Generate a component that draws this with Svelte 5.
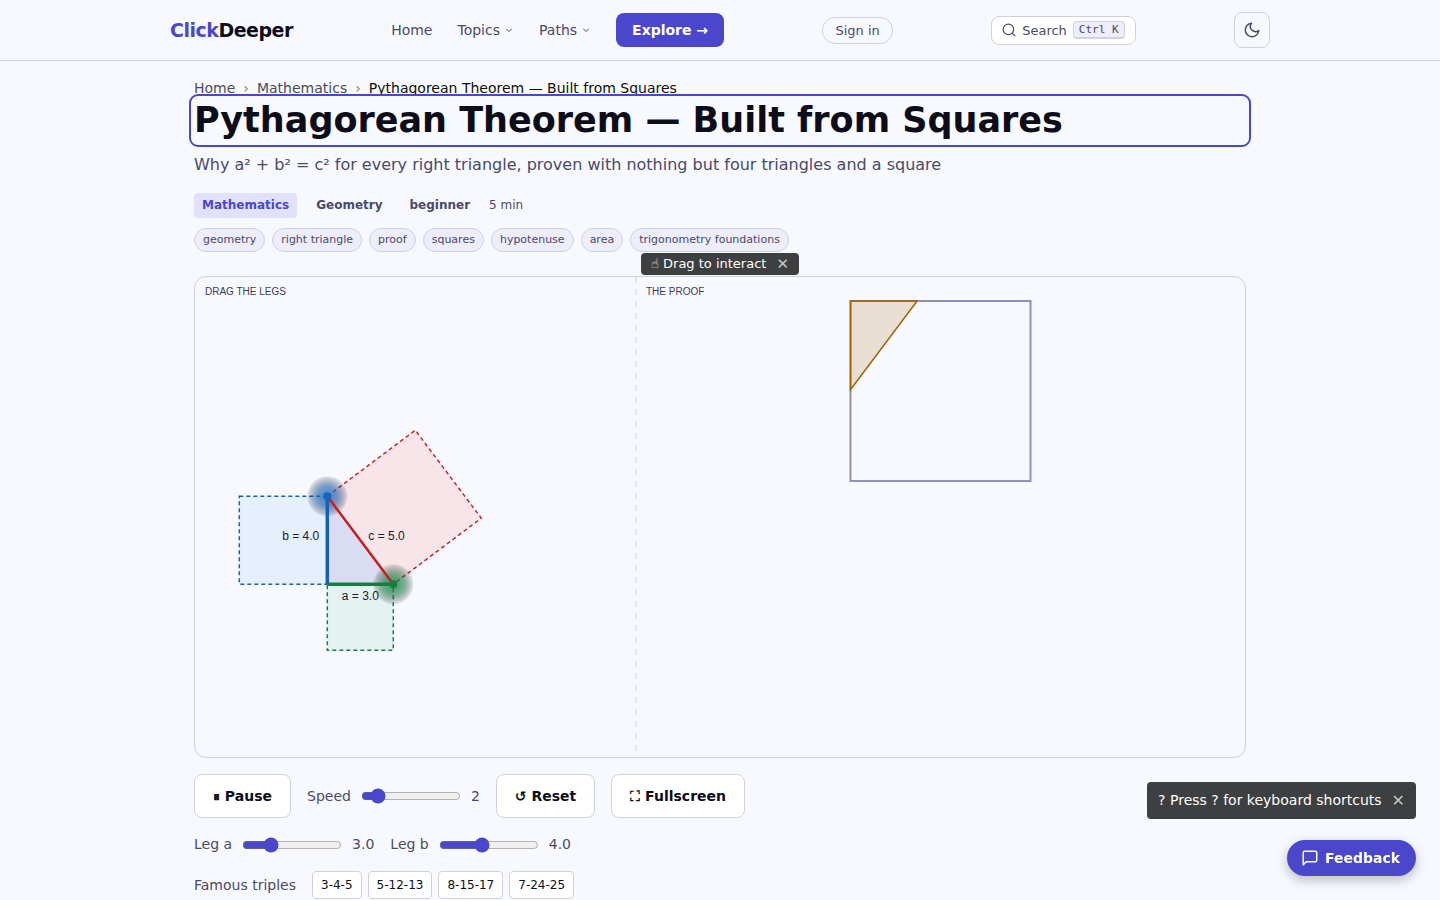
<script lang="ts">
    const topics = ['geometry', 'right triangle', 'proof', 'squares', 'hypotenuse', 'area', 'trigonometry foundations'];
    const triples = [[3, 4, 5], [5, 12, 13], [8, 15, 17], [7, 24, 25]];

    // drawing units: one leg unit = 22, right angle sits at (ox, oy)
    const unit = 22;
    const ox = 132.3;
    const oy = 307.2;

    let playing = $state(true);
    let speed = $state(2);
    let a = $state(3);
    let b = $state(4);
    let showDragHint = $state(true);
    let showKeyHint = $state(true);

    const c = $derived(Math.hypot(a, b));
    const w = $derived(a * unit);
    const h = $derived(b * unit);
    const squareC = $derived(
        `${ox},${oy - h} ${ox + h},${oy - h - w} ${ox + w + h},${oy - w} ${ox + w},${oy}`
    );
    const proofLegA = $derived(111 * a / c);
    const proofLegB = $derived(111 * b / c);

    const reset = () => {
        speed = 2;
        a = 3;
        b = 4;
        playing = true;
    };

    // large triples are scaled down so they fit the slider range
    const pickTriple = ([p, q]: number[]) => {
        const scale = q > 7 ? 7 / q : 1;
        a = Math.max(p * scale, 1.5);
        b = q * scale;
    };
</script>

<header>
    <div class="bar">
        <a class="logo" href="#home"><span>Click</span>Deeper</a>
        <nav>
            <a href="#home">Home</a>
            <button class="menu">
                Topics
                <svg width="10" height="10" viewBox="0 0 10 10"><path d="M2.5 4 5 6.5 7.5 4" /></svg>
            </button>
            <button class="menu">
                Paths
                <svg width="10" height="10" viewBox="0 0 10 10"><path d="M2.5 4 5 6.5 7.5 4" /></svg>
            </button>
            <a class="explore" href="#explore">Explore →</a>
        </nav>
        <button class="sign-in">Sign in</button>
        <button class="search">
            <svg width="14" height="14" viewBox="0 0 24 24"><circle cx="11" cy="11" r="9" /><path d="m22 22-4.5-4.5" /></svg>
            <span>Search</span>
            <kbd>Ctrl K</kbd>
        </button>
        <button class="theme" aria-label="Toggle dark mode">
            <svg width="18" height="18" viewBox="0 0 24 24"><path d="M21 12.79A9 9 0 1 1 11.21 3 7 7 0 0 0 21 12.79z" /></svg>
        </button>
    </div>
</header>

<main>
    <nav class="crumbs" aria-label="Breadcrumb">
        <a href="#home">Home</a>
        <span class="sep">›</span>
        <a href="#mathematics">Mathematics</a>
        <span class="sep">›</span>
        <span class="current">Pythagorean Theorem — Built from Squares</span>
    </nav>
    <h1>Pythagorean Theorem — Built from Squares</h1>
    <p class="subtitle">Why a² + b² = c² for every right triangle, proven with nothing but four triangles and a square</p>

    <div class="meta">
        <span class="badge subject">Mathematics</span>
        <span class="badge">Geometry</span>
        <span class="badge">beginner</span>
        <span class="time">5 min</span>
    </div>

    <div class="tags">
        {#each topics as topic}
            <a href="#{topic}">{topic}</a>
        {/each}
    </div>

    <div class="stage">
        {#if showDragHint}
            <div class="drag-hint">
                <span>☝ Drag to interact</span>
                <button aria-label="Dismiss" onclick={() => (showDragHint = false)}>✕</button>
            </div>
        {/if}
        <svg viewBox="0 0 1050 480">
            <defs>
                <radialGradient id="glow-b">
                    <stop offset="0" stop-color="#1565c0" stop-opacity="0.8" />
                    <stop offset="0.5" stop-color="#1a5dab" stop-opacity="0.6" />
                    <stop offset="1" stop-color="#101828" stop-opacity="0.08" />
                </radialGradient>
                <radialGradient id="glow-a">
                    <stop offset="0" stop-color="#15803d" stop-opacity="0.8" />
                    <stop offset="0.5" stop-color="#187a40" stop-opacity="0.6" />
                    <stop offset="1" stop-color="#101c14" stop-opacity="0.08" />
                </radialGradient>
            </defs>

            <line class="divider" x1="441" y1="0" x2="441" y2="480" />
            <text class="heading" x="10" y="18">DRAG THE LEGS</text>
            <text class="heading" x="451" y="18">THE PROOF</text>

            <rect class="square-b" x={ox - h} y={oy - h} width={h} height={h} />
            <rect class="square-a" x={ox} y={oy} width={w} height={w} />
            <polygon class="square-c" points={squareC} />
            <polygon class="triangle" points="{ox},{oy} {ox + w},{oy} {ox},{oy - h}" />

            <circle cx={ox} cy={oy - h} r="20" fill="url(#glow-b)" />
            <circle cx={ox + w} cy={oy} r="20" fill="url(#glow-a)" />

            <line class="hyp" x1={ox} y1={oy - h} x2={ox + w} y2={oy} />
            <line class="leg-a" x1={ox} y1={oy} x2={ox + w} y2={oy} />
            <line class="leg-b" x1={ox} y1={oy} x2={ox} y2={oy - h} />
            <circle cx={ox} cy={oy - h} r="4" fill="#1565c0" />
            <circle cx={ox + w} cy={oy} r="4" fill="#15803d" />

            <text class="length" text-anchor="end" x={ox - 8} y={oy - h / 2}>b = {b.toFixed(1)}</text>
            <text class="length" text-anchor="middle" x={ox + w / 2} y={oy + 16}>a = {a.toFixed(1)}</text>
            <text class="length" x={ox + w / 2 + 8} y={oy - h / 2}>c = {c.toFixed(1)}</text>

            <rect class="proof-square" x="655.5" y="24" width="180" height="180" />
            <polygon class="proof-triangle" points="655.5,24 {655.5 + proofLegA},24 655.5,{24 + proofLegB}" />
        </svg>
    </div>

    <div class="row">
        <button class="control" onclick={() => (playing = !playing)}>{playing ? '⏸ Pause' : '▶ Play'}</button>
        <label>Speed <input type="range" min="1" max="10" bind:value={speed} /> {speed}</label>
        <button class="control" onclick={reset}>↺ Reset</button>
        <button class="control">⛶ Fullscreen</button>
    </div>
    <div class="row">
        <label>Leg a <input type="range" min="1.5" max="7.5" step="0.1" bind:value={a} /> {a.toFixed(1)}</label>
        <label>Leg b <input type="range" min="1.5" max="7.5" step="0.1" bind:value={b} /> {b.toFixed(1)}</label>
    </div>
    <div class="row">
        <span>Famous triples</span>
        <div class="triples">
            {#each triples as triple}
                <button onclick={() => pickTriple(triple)}>{triple.join('-')}</button>
            {/each}
        </div>
    </div>
</main>

<div class="floating">
    {#if showKeyHint}
        <div class="key-hint">
            <span>? Press ? for keyboard shortcuts</span>
            <button aria-label="Dismiss" onclick={() => (showKeyHint = false)}>✕</button>
        </div>
    {/if}
    <button class="feedback">
        <svg width="18" height="18" viewBox="0 0 24 24"><path d="M21 15a2 2 0 0 1-2 2H7l-4 4V5a2 2 0 0 1 2-2h14a2 2 0 0 1 2 2z" /></svg>
        Feedback
    </button>
</div>

<style>
    :global(body) {
        background: #f8f9ff;
        color: #0d0d1a;
        font: 14px/21px 'DejaVu Sans', sans-serif;
        overflow: hidden;
    }

    button {
        font: inherit;
        color: inherit;
        cursor: pointer;
    }

    a {
        color: inherit;
        text-decoration: none;
    }

    header {
        border-bottom: 1px solid #d0d0e4;
    }

    .bar {
        max-width: 1100px;
        height: 60px;
        margin: 0 auto;
        display: flex;
        align-items: center;
        justify-content: space-between;
        color: #4a4a6a;
    }

    .logo {
        color: #0d0d1a;
        font-size: 19px;
        font-weight: 700;
        letter-spacing: -0.5px;
    }

    .logo span {
        color: #4a47cc;
    }

    .bar nav {
        display: flex;
        align-items: center;
        gap: 25px;
    }

    .menu {
        display: flex;
        align-items: center;
        gap: 4px;
        padding: 0;
        border: 0;
        background: none;
    }

    .bar svg,
    .feedback svg {
        fill: none;
        stroke: currentColor;
        stroke-width: 2;
        stroke-linecap: round;
        stroke-linejoin: round;
    }

    .bar .menu svg {
        stroke-width: 1;
    }

    .explore {
        padding: 7px 16px 6px;
        border-radius: 8px;
        background: #4a47cc;
        color: #fff;
        font-weight: 600;
    }

    .sign-in {
        padding: 2px 12px;
        border: 1px solid #d0d0e4;
        border-radius: 13px;
        background: none;
        font-size: 13px;
    }

    .search {
        display: flex;
        align-items: center;
        gap: 6px;
        padding: 3px 10px;
        border: 1px solid #d0d0e4;
        border-radius: 8px;
        background: #fff;
        font-size: 13px;
    }

    kbd {
        padding: 0 5px;
        border: 1px solid #d0d0e4;
        border-bottom-width: 2px;
        border-radius: 4px;
        background: #ededfb;
        font: 11px/15px 'DejaVu Sans Mono', monospace;
    }

    .theme {
        display: grid;
        place-items: center;
        width: 36px;
        height: 36px;
        padding: 0;
        border: 1px solid #d0d0e4;
        border-radius: 8px;
        background: none;
    }

    main {
        max-width: 1052px;
        margin: 0 auto;
        padding: 20px 24px;
        color: #4a4a6a;
    }

    .crumbs {
        display: flex;
        gap: 8px;
        height: 15px;
        line-height: 15px;
        overflow: hidden;
    }

    .sep {
        opacity: 0.7;
    }

    .current {
        color: #0d0d1a;
    }

    h1 {
        margin: 3px 0 0;
        border-radius: 4px;
        outline: 2px solid #4a47cc;
        outline-offset: 3px;
        color: #0d0d1a;
        font-size: 35px;
        line-height: 43px;
    }

    .subtitle {
        margin: 10px 0 15px;
        font-size: 16px;
        line-height: 26px;
    }

    .meta {
        display: flex;
        align-items: center;
        gap: 11px;
        margin-bottom: 10px;
        font-size: 12px;
    }

    .badge {
        padding: 2px 8px;
        border-radius: 4px;
        font-weight: 600;
    }

    .subject {
        background: #e2e1fc;
        color: #4a47cc;
    }

    .tags {
        display: flex;
        flex-wrap: wrap;
        gap: 7px;
        margin-bottom: 24px;
        font-size: 11px;
    }

    .tags a {
        padding: 0 8px;
        border: 1px solid #d0d0e4;
        border-radius: 12px;
        background: #ededfb;
        line-height: 22px;
    }

    .stage {
        position: relative;
        margin-bottom: 16px;
        border: 1px solid #d0d0e4;
        border-radius: 12px;
    }

    .stage > svg {
        display: block;
        width: 100%;
        font-family: 'Liberation Sans', sans-serif;
    }

    .drag-hint,
    .key-hint {
        display: flex;
        align-items: center;
        gap: 10px;
        padding: 8px 11px;
        border-radius: 4px;
        background: #3d3f40;
        color: #fff;
        white-space: nowrap;
    }

    .drag-hint {
        position: absolute;
        left: 50%;
        bottom: 100%;
        transform: translateX(-50%);
        margin-bottom: 2px;
        padding: 0 10px;
        font-size: 13px;
        line-height: 22px;
    }

    .drag-hint button,
    .key-hint button {
        padding: 0;
        border: 0;
        background: none;
        font-size: 16px;
        line-height: 21px;
        opacity: 0.7;
    }

    .drag-hint button {
        font-size: 15px;
    }

    .divider {
        stroke: #e5e5ef;
        stroke-width: 2;
        stroke-dasharray: 6 6;
    }

    .heading {
        fill: #3c3c58;
        font-size: 10px;
    }

    .length {
        fill: #1a1a2e;
        font-size: 12px;
    }

    .square-a,
    .square-b,
    .square-c {
        stroke-width: 1.5;
        stroke-dasharray: 4 3;
    }

    .square-a {
        fill: #e4f2f1;
        stroke: #15803d;
    }

    .square-b {
        fill: #e5effe;
        stroke: #1565a8;
    }

    .square-c {
        fill: #f7e5ea;
        stroke: #c62828;
    }

    .triangle {
        fill: #dadcf4;
    }

    .hyp {
        stroke: #c62020;
        stroke-width: 2.5;
    }

    .leg-a {
        stroke: #15803d;
        stroke-width: 3.5;
    }

    .leg-b {
        stroke: #1560b0;
        stroke-width: 3.5;
    }

    .proof-square {
        fill: none;
        stroke: #9490bb;
        stroke-width: 2;
    }

    .proof-triangle {
        fill: rgba(161, 98, 7, 0.18);
        stroke: #a16207;
        stroke-width: 1.5;
    }

    .row {
        display: flex;
        flex-wrap: wrap;
        align-items: center;
        gap: 16px;
        margin-bottom: 16px;
    }

    .control {
        height: 44px;
        padding: 0 18px;
        border: 1px solid #d0d0e4;
        border-radius: 8px;
        background: #fff;
        color: #0d0d1a;
        font-weight: 600;
    }

    label {
        display: flex;
        align-items: center;
        gap: 8px;
    }

    input {
        width: 100px;
        margin: 2px;
        accent-color: #4a47cc;
    }

    .triples {
        display: flex;
        gap: 6px;
    }

    .triples button {
        padding: 0 8px;
        border: 1px solid #d0d0e4;
        border-radius: 4px;
        background: #fff;
        color: #0d0d1a;
        font-size: 12px;
        line-height: 26px;
    }

    .floating {
        position: fixed;
        right: 24px;
        bottom: 24px;
        display: flex;
        flex-direction: column;
        align-items: flex-end;
        gap: 21px;
    }

    .feedback {
        display: flex;
        align-items: center;
        gap: 6px;
        height: 36px;
        padding: 0 16px 0 14px;
        border: 0;
        border-radius: 18px;
        background: #4a47cc;
        color: #fff;
        font-weight: 600;
        box-shadow: 0 4px 12px rgba(0, 0, 0, 0.25);
    }
</style>
